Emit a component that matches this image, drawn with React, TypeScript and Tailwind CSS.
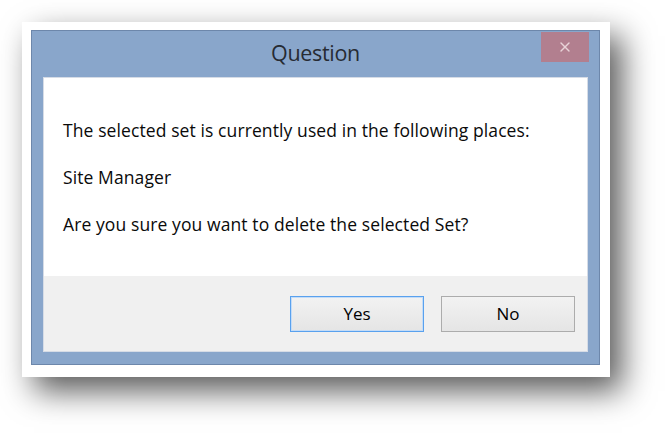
import { X } from 'lucide-react';

// Windows 8 style confirmation dialog, captured with a drop shadow frame
function DialogButton({ label, active }: { label: string; active?: boolean }) {
    return (
        <button
            className={
                'w-[134px] h-[36px] text-[17px] text-black bg-gradient-to-b from-[#f2f2f2] to-[#e5e5e5] border ' +
                (active ? 'border-[#59a1ee] shadow-[inset_0_0_0_1px_#c4dcf7]' : 'border-[#acacac]')
            }
        >
            {label}
        </button>
    );
}

export default function App() {
    return (
        <div className="w-[665px] h-[433px] bg-white overflow-hidden" style={{ fontFamily: '"Open Sans", "Noto Sans", sans-serif' }}>
            <div className="ml-[22px] mt-[22px] w-[588px] h-[355px] bg-white pl-[9px] pt-[8px] shadow-[12px_14px_30px_rgba(0,0,0,0.65)]">
                <div className="w-[569px] h-[335px] bg-[#89a6cb] border border-[#6d87ab] flex flex-col">
                    <div className="relative h-[46px] flex items-center justify-center">
                        <span className="text-[21.5px] text-[#262b33] tracking-[-0.3px] -mt-[2px]">Question</span>
                        <div className="absolute right-[10px] top-[1px] w-[48px] h-[30px] bg-[#b27f8f] flex items-center justify-center">
                            <X size={16} strokeWidth={2} className="text-[#e8d3d8]" />
                        </div>
                    </div>
                    <div className="mx-[11px] flex-1 flex flex-col border border-[#d6dce6]">
                        <div className="bg-white h-[198px] pl-[19px] pt-[40px] text-[17.5px] text-[#0a0a0a] flex flex-col gap-[23px] leading-[24px] tracking-[0.1px]">
                            <p>The selected set is currently used in the following places:</p>
                            <p>Site Manager</p>
                            <p>Are you sure you want to delete the selected Set?</p>
                        </div>
                        <div className="flex-1 bg-[#f0f0f0] flex justify-end items-start gap-[17px] pt-[20px] pr-[12px]">
                            <DialogButton label="Yes" active />
                            <DialogButton label="No" />
                        </div>
                    </div>
                    <div className="h-[12px]" />
                </div>
            </div>
        </div>
    );
}
